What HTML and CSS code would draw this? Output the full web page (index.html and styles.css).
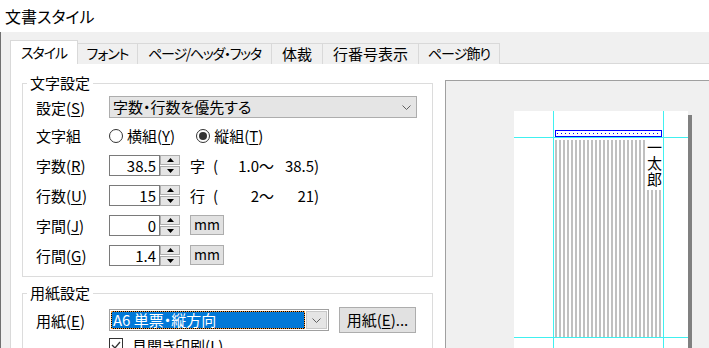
FILE: index.html
```html
<!DOCTYPE html>
<html lang="ja">
<head>
    <meta charset="UTF-8">
    <title>文書スタイル</title>
    <link rel="stylesheet" href="styles.css">
</head>
<body>
    <div class="titlebar">文書スタイル</div>
    <div class="window">
        <div class="tabs">
            <div class="tab tab-active">スタイル</div>
            <div class="tab">フォント</div>
            <div class="tab">ページ/ヘッダ・フッタ</div>
            <div class="tab">体裁</div>
            <div class="tab">行番号表示</div>
            <div class="tab">ページ飾り</div>
        </div>
        <div class="panel">
            <div class="settings">
                <div class="group">
                    <div class="group-title">文字設定</div>
                    <div class="rows">
                        <div class="row row-first">
                            <span class="label">設定(<u>S</u>)</span>
                            <div class="select">
                                <span>字数・行数を優先する</span>
                                <svg width="9" height="5" viewBox="0 0 9 5"><polyline points="0.5,0.5 4.5,4.5 8.5,0.5" fill="none" stroke="#606060"/></svg>
                            </div>
                        </div>
                        <div class="row row-radio">
                            <span class="label">文字組</span>
                            <div class="radio-opt"><span class="radio"></span>横組(<u>Y</u>)</div>
                            <div class="radio-opt"><span class="radio radio-on"></span>縦組(<u>T</u>)</div>
                        </div>
                        <div class="row">
                            <span class="label">字数(<u>R</u>)</span>
                            <div class="spin">
                                <div class="spin-input">38.5</div>
                                <div class="spin-btns">
                                    <div class="spin-btn"><svg width="7" height="4" viewBox="0 0 7 4"><polygon points="3.5,0 7,4 0,4"/></svg></div>
                                    <div class="spin-btn"><svg width="7" height="4" viewBox="0 0 7 4"><polygon points="0,0 7,0 3.5,4"/></svg></div>
                                </div>
                            </div>
                            <span class="unit">字</span>
                            <span class="range">(<span class="range-min">1.0</span>～<span class="range-max">38.5</span>)</span>
                        </div>
                        <div class="row">
                            <span class="label">行数(<u>U</u>)</span>
                            <div class="spin">
                                <div class="spin-input">15</div>
                                <div class="spin-btns">
                                    <div class="spin-btn"><svg width="7" height="4" viewBox="0 0 7 4"><polygon points="3.5,0 7,4 0,4"/></svg></div>
                                    <div class="spin-btn"><svg width="7" height="4" viewBox="0 0 7 4"><polygon points="0,0 7,0 3.5,4"/></svg></div>
                                </div>
                            </div>
                            <span class="unit">行</span>
                            <span class="range">(<span class="range-min">2</span>～<span class="range-max">21</span>)</span>
                        </div>
                        <div class="row">
                            <span class="label">字間(<u>J</u>)</span>
                            <div class="spin">
                                <div class="spin-input">0</div>
                                <div class="spin-btns">
                                    <div class="spin-btn"><svg width="7" height="4" viewBox="0 0 7 4"><polygon points="3.5,0 7,4 0,4"/></svg></div>
                                    <div class="spin-btn"><svg width="7" height="4" viewBox="0 0 7 4"><polygon points="0,0 7,0 3.5,4"/></svg></div>
                                </div>
                            </div>
                            <div class="btn btn-mm">mm</div>
                        </div>
                        <div class="row">
                            <span class="label">行間(<u>G</u>)</span>
                            <div class="spin">
                                <div class="spin-input">1.4</div>
                                <div class="spin-btns">
                                    <div class="spin-btn"><svg width="7" height="4" viewBox="0 0 7 4"><polygon points="3.5,0 7,4 0,4"/></svg></div>
                                    <div class="spin-btn"><svg width="7" height="4" viewBox="0 0 7 4"><polygon points="0,0 7,0 3.5,4"/></svg></div>
                                </div>
                            </div>
                            <div class="btn btn-mm">mm</div>
                        </div>
                    </div>
                </div>
                <div class="group">
                    <div class="group-title">用紙設定</div>
                    <div class="rows rows-paper">
                        <div class="row">
                            <span class="label">用紙(<u>E</u>)</span>
                            <div class="combo">
                                <div class="combo-value">A6 単票・縦方向</div>
                                <div class="combo-btn">
                                    <svg width="9" height="5" viewBox="0 0 9 5"><polyline points="0.5,0.5 4.5,4.5 8.5,0.5" fill="none" stroke="#606060"/></svg>
                                </div>
                            </div>
                            <div class="btn btn-paper">用紙(<u>E</u>)...</div>
                        </div>
                        <div class="row row-check">
                            <span class="label"></span>
                            <span class="check"><svg width="12" height="12" viewBox="0 0 12 12"><polyline points="2,6 5,9 10,3" fill="none" stroke="#333" stroke-width="1.3"/></svg></span>
                            見開き印刷(<u>L</u>)
                        </div>
                    </div>
                </div>
            </div>
            <div class="preview">
                <div class="page">
                    <div class="header-box"></div>
                    <div class="lines"><div class="sample">一太郎</div></div>
                </div>
            </div>
        </div>
    </div>
</body>
</html>
```

FILE: styles.css
```css
* { box-sizing: border-box; }
body { margin: 0; width: 709px; height: 348px; overflow: hidden; background: #f0f0f0; font-family: "Noto Sans CJK JP", sans-serif; font-size: 15px; color: #000; font-feature-settings: "palt"; }
u { text-underline-offset: 2px; }

.titlebar { height: 32px; padding-left: 5px; line-height: 32px; font-size: 16px; background: #fff; }
.window { width: 760px; height: 316px; padding-top: 8px; border-left: 1px solid #707070; }

.tabs { display: flex; align-items: flex-end; height: 24px; margin: 0 0 -1px 9px; }
.tab { height: 21px; margin-left: -1px; font-size: 14px; line-height: 19px; letter-spacing: -1px; text-align: center; white-space: nowrap; background: #f0f0f0; border: 1px solid #d9d9d9; border-bottom: none; }
.tab-active { position: relative; height: 24px; margin-left: 0; padding-top: 1px; line-height: 20px; background: #fff; }
.tab:nth-child(1) { width: 68px; }
.tab:nth-child(2) { width: 61px; }
.tab:nth-child(3) { width: 135px; letter-spacing: -1.3px; }
.tab:nth-child(4) { width: 52px; font-size: 15px; letter-spacing: 0; }
.tab:nth-child(5) { width: 97px; font-size: 15px; letter-spacing: 0; }
.tab:nth-child(6) { width: 82px; }

.panel { display: flex; align-items: flex-start; height: 300px; margin-left: 9px; background: #fff; border-top: 1px solid #d9d9d9; border-left: 1px solid #d9d9d9; }
.settings { flex: none; padding: 19px 0 0 11px; }
.group { width: 411px; border: 1px solid #dcdcdc; }
.group + .group { margin-top: 16px; }
.group-title { width: fit-content; margin: -9px 0 0 4px; padding: 0 3px; line-height: 16px; background: #fff; }
.rows { padding: 2px 0 6px 13px; }
.rows-paper { padding-top: 4px; }
.row { display: flex; align-items: center; height: 30px; white-space: nowrap; }
.row-first { height: 28px; }
.row-radio { height: 29px; }
.row-check { height: 20px; }
.label { flex: none; width: 73px; }

.select { display: flex; align-items: center; justify-content: space-between; width: 308px; height: 22px; padding: 0 5px 0 3px; background: #e5e5e5; border: 1px solid #adadad; line-height: 20px; }

.radio-opt { display: flex; align-items: center; margin-right: 21px; }
.radio { display: flex; align-items: center; justify-content: center; width: 14px; height: 14px; margin-right: 4px; background: #fff; border: 1px solid #333; border-radius: 50%; }
.radio-on::after { content: ""; width: 8px; height: 8px; background: #333; border-radius: 50%; }

.spin { display: flex; height: 21px; }
.spin-input { width: 51px; padding-right: 3px; line-height: 19px; text-align: right; background: #fff; border: 1px solid #7a7a7a; }
.spin-btns { display: flex; flex-direction: column; gap: 1px; width: 20px; }
.spin-btn { display: flex; flex: 1; align-items: center; justify-content: center; background: #e5e5e5; border: 1px solid #adadad; }
.unit { width: 23px; margin-left: 10px; }
.range { display: flex; }
.range-min { width: 41px; text-align: right; }
.range-max { width: 40px; text-align: right; }

.btn { text-align: center; background: #e1e1e1; border: 1px solid #adadad; }
.btn-mm { width: 34px; height: 20px; margin-left: 10px; font-size: 14px; line-height: 17px; }
.btn-paper { width: 77px; height: 26px; margin-left: 10px; line-height: 24px; }

.combo { display: flex; gap: 1px; width: 220px; height: 22px; padding: 1px; background: #fff; border: 1px solid #a0a0a0; }
.combo-value { flex: 1; padding-left: 1px; color: #fff; line-height: 16px; border: 1px dotted #f59a3b; background: linear-gradient(#0078d7, #0078d7) padding-box, #000; }
.combo-btn { display: flex; align-items: center; justify-content: center; width: 21px; background: #e5e5e5; border: 1px solid #c8c8c8; }

.check { display: flex; align-items: center; justify-content: center; width: 14px; height: 14px; margin-right: 9px; background: #fff; border: 1px solid #333; }

.preview { flex: none; width: 300px; height: 300px; margin: 16px 0 0 12px; background: #f0f0f0; border: 1px solid #a0a0a0; }
.page { width: 174px; height: 260px; margin: 30px 0 0 68px; padding: 19px 0 0 41px; box-shadow: 4px 4px 0 #808080;
    background:
        linear-gradient(to right, transparent 39px, #40f0f0 39px 40px, transparent 40px),
        linear-gradient(to right, transparent 149px, #40f0f0 149px 150px, transparent 150px),
        linear-gradient(to bottom, transparent 26px, #40f0f0 26px 27px, transparent 27px),
        linear-gradient(to bottom, transparent 226px, #40f0f0 226px 227px, transparent 227px),
        #fff; }
.header-box { width: 107px; height: 7px; border: 1px solid #0000ff; background: repeating-linear-gradient(to right, #0000ff 0 1px, #fff 1px 4px) 1px 2px / 100% 1px no-repeat, #fff; }
.lines { display: flex; justify-content: flex-end; align-items: flex-start; width: 107px; height: 197px; margin-top: 3px; background: repeating-linear-gradient(to right, #c0c0c0 0 2px, #fff 2px 4px); }
.sample { padding-bottom: 2px; writing-mode: vertical-rl; font-size: 15px; line-height: 15px; letter-spacing: 1px; background: #fff; }
```
